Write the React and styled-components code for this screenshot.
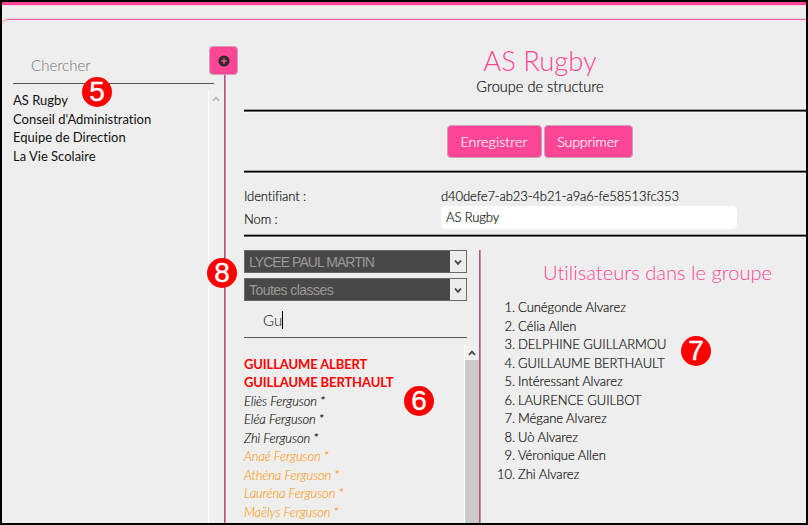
import React from 'react';
import styled, { createGlobalStyle } from 'styled-components';

const GlobalStyle = createGlobalStyle`
  *, *::before, *::after { box-sizing: border-box; }
  body { margin: 0; background: #eee; }
  ul, ol, h1, h2, p { margin: 0; padding: 0; list-style: none; }
`;

const Frame = styled.div`
  position: relative;
  width: 808px;
  height: 525px;
  border: 2px solid #000;
  overflow: hidden;
  background: #eeeeee;
  color: #111;
  font-family: Lato, "Liberation Sans", sans-serif;
  font-size: 14px;
  font-weight: 300;
  font-variant-ligatures: none;
`;

const TopBar = styled.div`
  height: 4px;
  background: #ff4696;
  border-bottom: 1px solid #fbd3e3;
  box-shadow: 0 1px 0 #f5eff2;
`;

const Panel = styled.main`
  display: flex;
  width: 840px;
  height: 506px;
  margin-top: 13px;
  border-top: 1px solid #ff5ca3;
  border-top-left-radius: 6px;
  box-shadow: 0 -1px 0 #dcdcdc;
`;

const Sidebar = styled.aside`
  display: flex;
  flex-direction: column;
  flex: none;
  width: 205px;
  padding: 27px 0 0 11px;
`;

const SearchField = styled.div`
  display: flex;
  align-items: center;
  height: ${(p) => p.$height}px;
  width: ${(p) => p.$width}px;
  padding: 0 0 ${(p) => p.$lift || 0}px ${(p) => p.$indent}px;
  border-bottom: 1px solid #555;
  color: ${(p) => p.$color};
  font-size: 15px;
`;

const Caret = styled.span`
  width: 1px;
  height: 18px;
  background: #000;
`;

const GroupList = styled.ul`
  padding-top: 7px;
  font-weight: 400;
  font-size: 13px;
  line-height: 18.6px;
  color: #111;
  white-space: nowrap;
`;

const Rail = styled.div`
  display: flex;
  flex-direction: column;
  flex: none;
  width: 37px;
  padding: 26px 0 0 2px;
`;

const AddButton = styled.button`
  display: grid;
  place-items: center;
  width: 29px;
  height: 29px;
  padding: 0;
  border: 1px solid #c9a3b4;
  border-radius: 4px;
  background: #ff4696;
`;

const RailTrack = styled.div`
  display: flex;
  flex: 1;
`;

const GhostScroll = styled.div`
  width: 16px;
  margin: 15px 0 0 -1px;
  padding: 5px 0 0 3px;
  border-left: 1px solid #fff;
  background: #f0f0f0;
  line-height: 0;
`;

const Divider = styled.div`
  flex: none;
  width: 2px;
  background: linear-gradient(90deg, #b45482 50%, #d184a8 50%);
  box-shadow: 1px 0 0 #f6f2f4;
`;

const Content = styled.section`
  display: flex;
  flex-direction: column;
  flex: none;
  width: 592px;
`;

const RuledBlock = styled.div`
  border-bottom: 1px solid #000;
  box-shadow: inset 0 -1px 0 #a2a2a2, 0 1px 0 #666, 0 2px 0 #f8f8f8;
`;

const Heading = styled(RuledBlock)`
  height: 91px;
  padding-top: 25px;
  text-align: center;
`;

const Title = styled.h1`
  color: #ff4696;
  font-size: 27.4px;
  font-weight: 300;
  line-height: 32px;
`;

const Subtitle = styled.p`
  font-size: 14.6px;
  line-height: 19px;
  -webkit-text-stroke: 0.2px currentColor;
`;

const Actions = styled(RuledBlock)`
  display: flex;
  justify-content: center;
  gap: 2px;
  height: 61px;
  padding-top: 14px;
`;

const ActionButton = styled.button`
  width: ${(p) => p.$width}px;
  height: 33px;
  padding: 0 1px 1px 0;
  border: 1px solid #c9a3b4;
  border-radius: 4px;
  background: #ff4696;
  color: #fff;
  font: 300 14.3px Lato, sans-serif;
  font-variant-ligatures: none;
  letter-spacing: ${(p) => p.$spacing}px;
  -webkit-text-stroke: 0.15px currentColor;
`;

const Details = styled(RuledBlock)`
  display: grid;
  grid-template-columns: 197px 1fr;
  grid-template-rows: 21px 25px;
  align-items: center;
  height: 64px;
  padding-top: 13px;
  font-size: 13px;
  letter-spacing: -0.1px;
  -webkit-text-stroke: 0.2px currentColor;
`;

const NameInput = styled.div`
  width: 296px;
  height: 23px;
  margin-top: -3px;
  padding-left: 5px;
  border-radius: 5px;
  background: #fff;
  line-height: 23px;
`;

const Columns = styled.div`
  display: flex;
  flex: 1;
  padding-top: 14px;
`;

const Picker = styled.div`
  display: flex;
  flex-direction: column;
  flex: none;
  width: 235px;
`;

const Select = styled.div`
  display: flex;
  width: 223px;
  height: 23px;
  margin-bottom: 5px;
  border: 1px solid #686868;
  background: #484848;
  color: #999;
  font: 400 14px/23px "Liberation Sans", Arial, sans-serif;
`;

const SelectLabel = styled.span`
  flex: 1;
  padding-left: 4px;
  white-space: nowrap;
  letter-spacing: ${(p) => p.$spacing}px;
`;

const SelectArrow = styled.span`
  display: grid;
  place-items: center;
  width: 16px;
  background: #ededed;
`;

const Results = styled.div`
  display: flex;
  justify-content: space-between;
  flex: 1;
  padding-top: 7px;
`;

const UserList = styled.ul`
  padding-top: 10px;
  font-size: 13px;
  line-height: 18.45px;
  letter-spacing: -0.12px;
  white-space: nowrap;
`;

const UserItem = styled.li`
  color: ${(p) => ({ match: '#ff0000', member: '#000', other: '#ff9a10' }[p.$kind])};
  font-weight: ${(p) => (p.$kind === 'match' ? 700 : 300)};
  font-style: ${(p) => (p.$kind === 'match' ? 'normal' : 'italic')};
  -webkit-text-stroke: ${(p) => (p.$kind === 'match' ? 0 : 0.1)}px currentColor;
`;

const Scrollbar = styled.div`
  width: 15px;
  border-left: 1px solid #fff;
  background: #cbcbcb;
`;

const ScrollUp = styled.div`
  display: grid;
  place-items: center;
  height: 15px;
  background: #f0f0f0;
`;

const Members = styled.div`
  flex: 1;
  padding-top: 10px;
`;

const MembersTitle = styled.h2`
  width: 353px;
  color: #ff4696;
  font-size: 20.1px;
  font-weight: 300;
  line-height: 24px;
  text-align: center;
`;

const MemberList = styled.ol`
  padding-top: 14px;
  font-size: 13px;
  line-height: 18.5px;
  letter-spacing: -0.03px;
  white-space: nowrap;
  -webkit-text-stroke: 0.2px currentColor;
`;

const MemberItem = styled.li`
  display: flex;
  gap: 3px;
`;

const MemberIndex = styled.span`
  width: 34px;
  text-align: right;
`;

const Badge = styled.span`
  position: absolute;
  left: ${(p) => p.$x}px;
  top: ${(p) => p.$y}px;
  width: 30px;
  height: 30px;
  border-radius: 50%;
  background: #ff0000;
  color: #fff;
  font: 400 28px/30px "Liberation Sans", Arial, sans-serif;
  text-align: center;
  -webkit-text-stroke: 0.4px #fff;
`;

const Chevron = ({ up, color, size = 8 }) => (
  <svg width={size} height={size} viewBox="0 0 8 8" fill="none" stroke={color} strokeWidth="1.8">
    <path d={up ? 'M1 6 L4 2.6 L7 6' : 'M1 2.5 L4 5.9 L7 2.5'} />
  </svg>
);

const PlusIcon = () => (
  <svg width="12" height="12" viewBox="0 0 12 12">
    <circle cx="6" cy="6" r="5.6" fill="#2b2b2b" />
    <path d="M6 3.2V8.8M3.2 6H8.8" stroke="#ff4696" strokeWidth="1.6" />
  </svg>
);

const groups = ['AS Rugby', "Conseil d'Administration", 'Equipe de Direction', 'La Vie Scolaire'];

const users = [
  ['GUILLAUME ALBERT', 'match'],
  ['GUILLAUME BERTHAULT', 'match'],
  ['Eliès Ferguson *', 'member'],
  ['Eléa Ferguson *', 'member'],
  ['Zhì Ferguson *', 'member'],
  ['Anaé Ferguson *', 'other'],
  ['Athéna Ferguson *', 'other'],
  ['Lauréna Ferguson *', 'other'],
  ['Maëlys Ferguson *', 'other'],
];

const members = [
  'Cunégonde Alvarez',
  'Célia Allen',
  'DELPHINE GUILLARMOU',
  'GUILLAUME BERTHAULT',
  'Intéressant Alvarez',
  'LAURENCE GUILBOT',
  'Mégane Alvarez',
  'Uò Alvarez',
  'Véronique Allen',
  'Zhì Alvarez',
];

const badges = [
  [5, 82 - 2, 75],
  [8, 205, 256],
  [6, 402, 384],
  [7, 679, 334],
];

export default function App() {
  return (
    <Frame>
      <GlobalStyle />
      <TopBar />
      <Panel>
        <Sidebar>
          <SearchField $height={37} $width={201} $indent={18} $color="#777">Chercher</SearchField>
          <GroupList>
            {groups.map((g) => <li key={g}>{g}</li>)}
          </GroupList>
        </Sidebar>
        <Rail>
          <AddButton aria-label="Ajouter"><PlusIcon /></AddButton>
          <RailTrack>
            <GhostScroll><Chevron up color="#bbb" /></GhostScroll>
            <Divider />
          </RailTrack>
        </Rail>
        <Content>
          <Heading as="header">
            <Title>AS Rugby</Title>
            <Subtitle>Groupe de structure</Subtitle>
          </Heading>
          <Actions>
            <ActionButton $width={95} $spacing={0.05}>Enregistrer</ActionButton>
            <ActionButton $width={89} $spacing={-0.2}>Supprimer</ActionButton>
          </Actions>
          <Details>
            <span>Identifiant :</span>
            <span>d40defe7-ab23-4b21-a9a6-fe58513fc353</span>
            <span>Nom :</span>
            <NameInput>AS Rugby</NameInput>
          </Details>
          <Columns>
            <Picker>
              <Select>
                <SelectLabel $spacing={-0.95}>LYCEE PAUL MARTIN</SelectLabel>
                <SelectArrow><Chevron color="#444" /></SelectArrow>
              </Select>
              <Select>
                <SelectLabel $spacing={-0.55}>Toutes classes</SelectLabel>
                <SelectArrow><Chevron color="#444" /></SelectArrow>
              </Select>
              <SearchField $height={32} $width={223} $indent={19} $lift={3} $color="#111">Gu<Caret /></SearchField>
              <Results>
                <UserList>
                  {users.map(([name, kind]) => <UserItem key={name} $kind={kind}>{name}</UserItem>)}
                </UserList>
                <Scrollbar><ScrollUp><Chevron up color="#444" /></ScrollUp></Scrollbar>
              </Results>
            </Picker>
            <Divider />
            <Members>
              <MembersTitle>Utilisateurs dans le groupe</MembersTitle>
              <MemberList>
                {members.map((m, i) => (
                  <MemberItem key={m}>
                    <MemberIndex>{i + 1}.</MemberIndex>
                    <span>{m}</span>
                  </MemberItem>
                ))}
              </MemberList>
            </Members>
          </Columns>
        </Content>
      </Panel>
      {badges.map(([n, x, y]) => <Badge key={n} $x={x} $y={y}>{n}</Badge>)}
    </Frame>
  );
}
